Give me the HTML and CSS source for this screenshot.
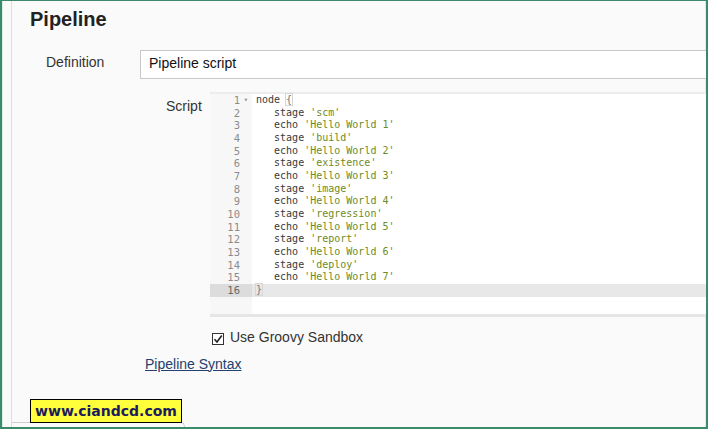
FILE: index.html
```html
<!DOCTYPE html>
<html lang="en">
<head>
<meta charset="UTF-8">
<meta name="viewport" content="width=device-width, initial-scale=1.0">
<title>Pipeline</title>
<link rel="stylesheet" href="styles.css">
</head>
<body>

<div class="frame">
  <div class="page">
    <h2 class="section-title">Pipeline</h2>

    <!-- Definition select -->
    <div class="row definition-row">
      <div class="label definition-label">Definition</div>
      <div class="select">Pipeline script</div>
    </div>

    <div class="nested">
      <!-- Script editor -->
      <div class="row">
        <div class="label script-label">Script</div>
        <div class="editor">
          <div class="line"><span class="num">1<span class="fold">&#9662;</span></span><span class="code">node <span class="match">{</span></span></div>
          <div class="line"><span class="num">2<span class="fold"></span></span><span class="code">   stage <span class="str">'scm'</span></span></div>
          <div class="line"><span class="num">3<span class="fold"></span></span><span class="code">   echo <span class="str">'Hello World 1'</span></span></div>
          <div class="line"><span class="num">4<span class="fold"></span></span><span class="code">   stage <span class="str">'build'</span></span></div>
          <div class="line"><span class="num">5<span class="fold"></span></span><span class="code">   echo <span class="str">'Hello World 2'</span></span></div>
          <div class="line"><span class="num">6<span class="fold"></span></span><span class="code">   stage <span class="str">'existence'</span></span></div>
          <div class="line"><span class="num">7<span class="fold"></span></span><span class="code">   echo <span class="str">'Hello World 3'</span></span></div>
          <div class="line"><span class="num">8<span class="fold"></span></span><span class="code">   stage <span class="str">'image'</span></span></div>
          <div class="line"><span class="num">9<span class="fold"></span></span><span class="code">   echo <span class="str">'Hello World 4'</span></span></div>
          <div class="line"><span class="num">10<span class="fold"></span></span><span class="code">   stage <span class="str">'regression'</span></span></div>
          <div class="line"><span class="num">11<span class="fold"></span></span><span class="code">   echo <span class="str">'Hello World 5'</span></span></div>
          <div class="line"><span class="num">12<span class="fold"></span></span><span class="code">   stage <span class="str">'report'</span></span></div>
          <div class="line"><span class="num">13<span class="fold"></span></span><span class="code">   echo <span class="str">'Hello World 6'</span></span></div>
          <div class="line"><span class="num">14<span class="fold"></span></span><span class="code">   stage <span class="str">'deploy'</span></span></div>
          <div class="line"><span class="num">15<span class="fold"></span></span><span class="code">   echo <span class="str">'Hello World 7'</span></span></div>
          <div class="line active"><span class="num">16<span class="fold"></span></span><span class="code"><span class="match">}</span></span></div>
          <div class="line filler"><span class="num"></span><span class="code"></span></div>
        </div>
      </div>

      <!-- Sandbox checkbox -->
      <div class="checkbox-row">
        <span class="checkbox">
          <svg width="10" height="10" viewBox="0 0 10 10"><path d="M1.5 5.2 L4 8 L8.8 1.5" fill="none" stroke="#222" stroke-width="1.6"/></svg>
        </span>
        <span>Use Groovy Sandbox</span>
      </div>

      <a class="syntax-link" href="#">Pipeline Syntax</a>
    </div>

    <div class="tab-edge"></div>
  </div>

  <div class="watermark">www.ciandcd.com</div>
</div>

</body>
</html>
```

FILE: styles.css
```css
/* General Styling */
body {
  margin: 0;
  font-family: "Liberation Sans", Arial, sans-serif;
  color: #333;
  background-color: #fafafa;
}

.frame {
  position: relative;
  width: 708px;
  height: 429px;
  box-sizing: border-box;
  border: 2px solid #3b8a6c;
  border-top-width: 1px;
  box-shadow: inset 1px 0 0 #dcefe7, inset -1px 0 0 #dcefe7;
  background-color: #fafafa;
  overflow: hidden;
}

.page {
  display: flex;
  flex-direction: column;
  height: 100%;
  margin-left: 9px;
  border-left: 1px solid #dedede;
  padding-top: 6px;
  box-sizing: border-box;
}

.section-title {
  margin: 0 0 0 18px;
  font-size: 20px;
  line-height: 24px;
  font-weight: bold;
  color: #222;
}

.row {
  display: flex;
  align-items: flex-start;
}

.definition-row {
  margin-top: 19px;
}

.label {
  font-size: 14px;
  line-height: 16px;
  color: #333;
  flex-shrink: 0;
  box-sizing: border-box;
}

.definition-label {
  width: 128px;
  padding-left: 34px;
  padding-top: 4px;
}

/* Select-like box */
.select {
  flex: 1;
  height: 29px;
  margin-right: -12px;
  box-sizing: border-box;
  border: 1px solid #c8c8c8;
  background-color: #fff;
  padding: 0 8px 2px;
  font-size: 14px;
  line-height: 25px;
  color: #111;
}

.nested {
  margin-left: 128px;
  margin-top: 13px;
}

.script-label {
  width: 70px;
  padding-left: 26px;
  padding-top: 6px;
}

/* Code editor */
.editor {
  flex: 1;
  margin-right: -12px;
  border-top: 2px solid #ececec;
  border-bottom: 3px solid #e6e6e6;
  background-color: #fff;
  font-family: "DejaVu Sans Mono", "Liberation Mono", monospace;
  font-size: 10px;
}

.line {
  display: flex;
  height: 12.67px;
  line-height: 12.67px;
}

.num {
  width: 42px;
  flex-shrink: 0;
  box-sizing: border-box;
  padding-right: 4px;
  text-align: right;
  font-size: 10.5px;
  color: #8c8c8c;
  background-color: #f7f7f7;
}

.fold {
  display: inline-block;
  width: 8px;
  font-size: 7px;
  text-align: right;
  vertical-align: top;
}

.code {
  flex: 1;
  padding-left: 4px;
  white-space: pre;
  color: #3a3a3a;
}

.str {
  color: #6f8a22;
}

.match {
  outline: 1px solid #d6d6d6;
  color: #777;
}

.line.active .num {
  background-color: #dcdcdc;
  color: #666;
}

.line.active .code {
  background-color: #e8e8e8;
}

.line.filler {
  height: 17px;
}

/* Checkbox row */
.checkbox-row {
  display: flex;
  align-items: flex-start;
  margin-top: 10px;
  margin-left: 72px;
  font-size: 14px;
  line-height: 20px;
  color: #333;
}

.checkbox {
  display: flex;
  align-items: center;
  justify-content: center;
  width: 12px;
  height: 12px;
  box-sizing: border-box;
  margin-top: 6px;
  margin-right: 6px;
  border: 1px solid #333;
  background-color: #fff;
}

.syntax-link {
  display: inline-block;
  margin-top: 9px;
  margin-left: 5px;
  font-size: 14px;
  line-height: 16px;
  color: #24406e;
  text-decoration: underline;
}

/* Bottom tab outline */
.tab-edge {
  margin-top: auto;
  width: 172px;
  height: 4px;
  border-top: 1px solid #cfcfcf;
  border-right: 1px solid #cfcfcf;
  border-top-right-radius: 6px;
}

/* Watermark overlay */
.watermark {
  position: absolute;
  left: 28px;
  top: 398px;
  width: 152px;
  height: 24px;
  box-sizing: border-box;
  border: 1px solid #000;
  background-color: #ffff3c;
  font-family: "DejaVu Sans", Verdana, sans-serif;
  font-size: 14px;
  font-weight: bold;
  line-height: 22px;
  text-align: center;
  color: #1c1c5c;
}
```
